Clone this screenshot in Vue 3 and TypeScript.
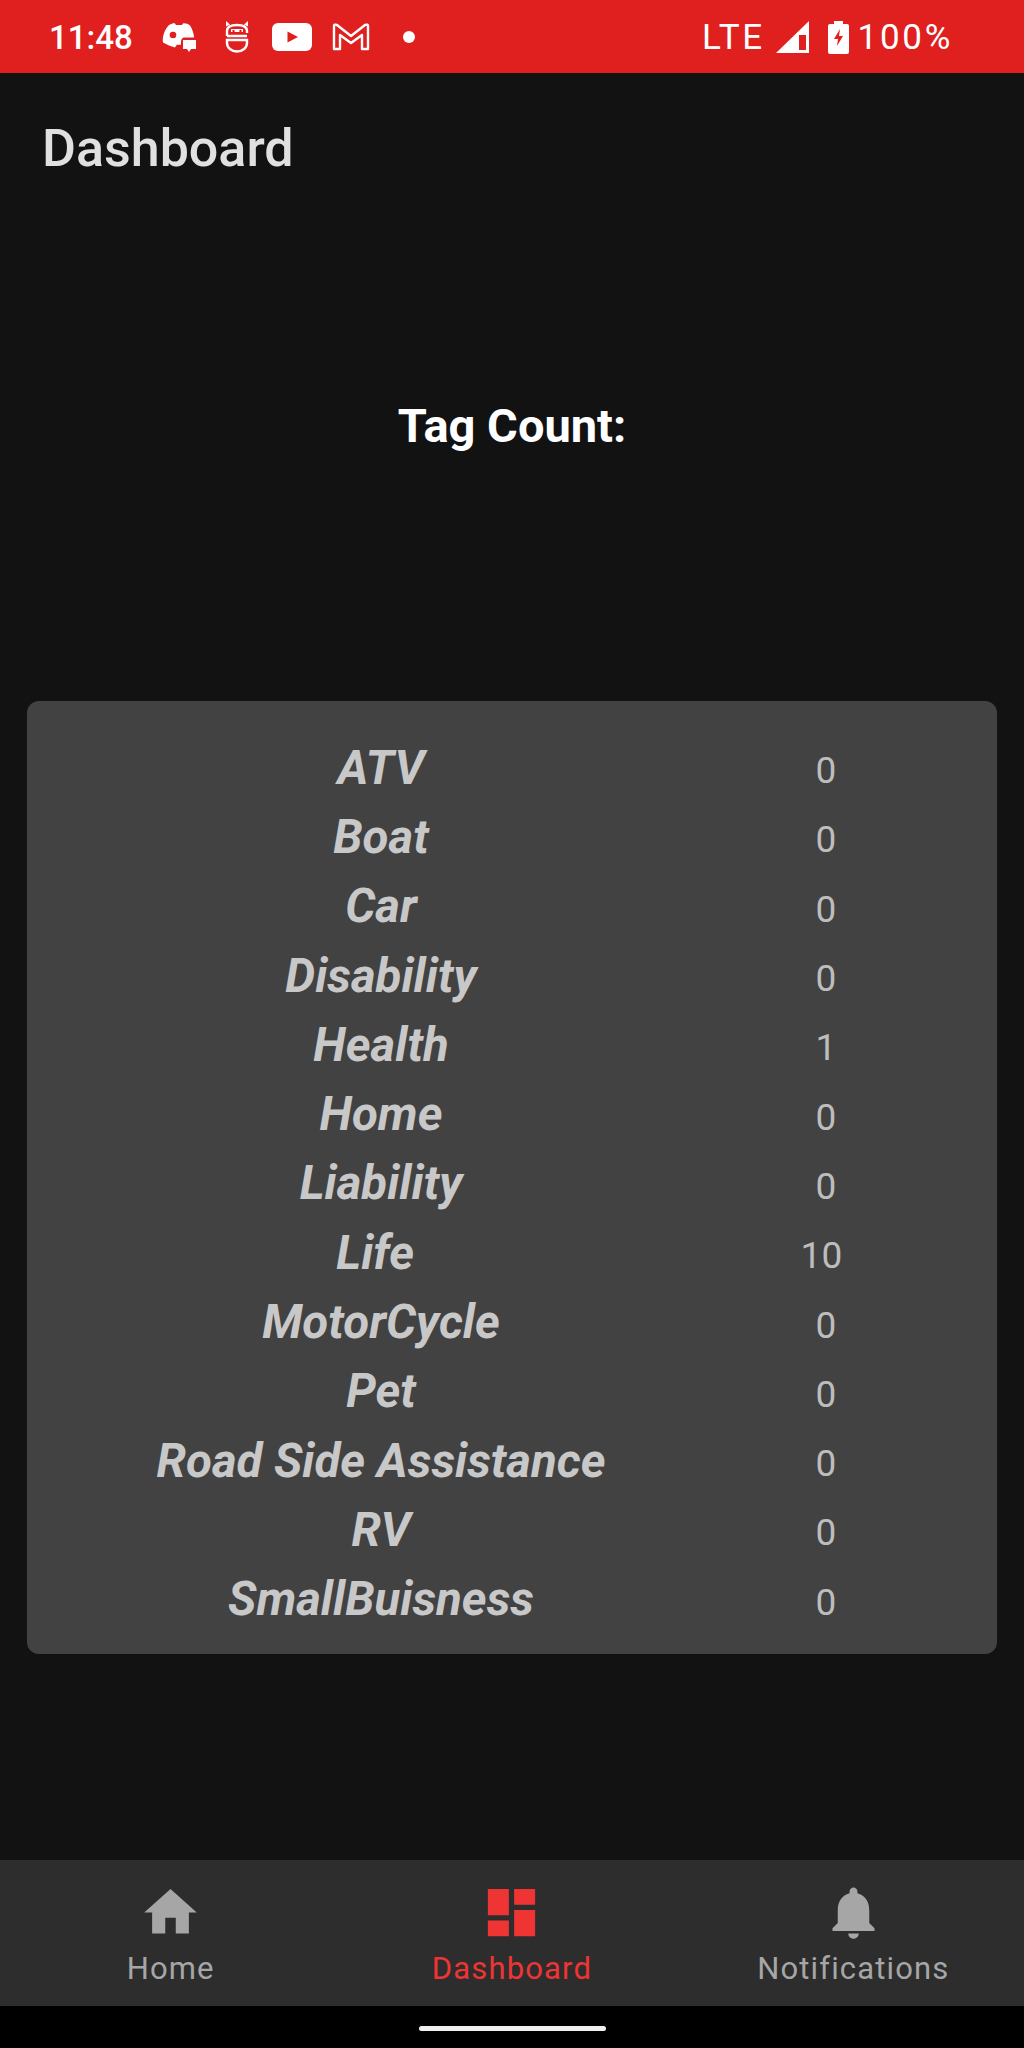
<template>
  <div class="screen">
    <div class="status-bar">
      <span class="clock">11:48</span>
      <div class="notif-icons">
        <svg viewBox="0 0 36 30" width="36" height="30">
          <path fill="#fff" d="M8 3c3-1.500 5-2 6-1.500l1 1.500h6l1-1.500c2-.5 5 .5 7 2 2 3 4 8 4 12h-9c-3 0-4 2-4 5v2c-2 .5-3 .5-4 0l-2 3c-4-1-8-3-12-5C1 16 3 8 8 3z" />
          <circle cx="12" cy="13" r="3.300" fill="#e01f1f" />
          <path fill="#fff" d="M22 18h13v9h-5l-2 3-2-3h-4z" />
        </svg>
        <svg viewBox="0 0 26 32" width="26" height="32">
          <path fill="none" stroke="#fff" stroke-width="2.400" d="M3 15V10q0-6 10-6t10 6v2M3 15h20M3 19h20v3a10 8.500 0 0 1-20 0z" />
          <path fill="#fff" d="M7 8h12v3H7z" />
          <circle cx="9.500" cy="10" r="1.200" fill="#e01f1f" />
          <circle cx="16.500" cy="10" r="1.200" fill="#e01f1f" />
          <path fill="#fff" d="M2 0l4 3.500-4 2zM24 0l-4 3.500 4 2z" />
        </svg>
        <svg viewBox="0 0 40 28" width="40" height="28">
          <rect width="40" height="28" rx="6" fill="#fff" />
          <path fill="#e01f1f" d="M15.500 8.500 26 14l-10.500 5.500z" />
        </svg>
        <svg viewBox="0 0 38 30" width="38" height="30">
          <path fill="none" stroke="#fff" stroke-width="2.400" stroke-linejoin="round" d="M2 27V4q0-2 3-1l14 11L33 3q3-1 3 1v23h-6V13L19 21 8 13v14z" />
        </svg>
        <span class="dot"></span>
      </div>
      <div class="sys-icons">
        <span class="lte">LTE</span>
        <svg class="ic-signal" viewBox="0 0 33 32" width="33" height="32">
          <path fill="#fff" d="M33 0v32H0z" />
          <path fill="#e01f1f" d="M23 14h7v15h-7z" />
        </svg>
        <svg viewBox="0 0 21 33" width="21" height="33">
          <path fill="#fff" d="M6 0h9v3h4q2 0 2 2v26q0 2-2 2H2q-2 0-2-2V5q0-2 2-2h4z" />
          <path fill="#e01f1f" d="M12 8 6 18h4l-1 7 6-10h-4z" />
        </svg>
        <span class="battery-pct">100%</span>
      </div>
    </div>

    <main class="content">
      <h1 class="title">Dashboard</h1>
      <h2 class="tag-count">Tag Count:</h2>
      <section class="card">
        <div v-for="tag in tags" :key="tag.name" class="row">
          <span class="tag-name">{{ tag.name }}</span>
          <span class="tag-value">{{ tag.count }}</span>
        </div>
      </section>
    </main>

    <nav class="bottom-nav">
      <div v-for="item in navItems" :key="item.id" class="nav-item" :class="{ active: item.id === 'dashboard' }">
        <svg class="nav-icon" viewBox="0 0 24 24" width="63" height="63">
          <path fill="currentColor" :d="item.path" />
        </svg>
        <span class="nav-label">{{ item.label }}</span>
      </div>
    </nav>

    <div class="gesture-area">
      <span class="gesture-pill"></span>
    </div>
  </div>
</template>

<script setup lang="ts">
// the Life row has a trailing space in both cells, which pulls it off centre
const tags: { name: string; count: string }[] = [
  { name: 'ATV', count: '0' },
  { name: 'Boat', count: '0' },
  { name: 'Car', count: '0' },
  { name: 'Disability', count: '0' },
  { name: 'Health', count: '1' },
  { name: 'Home', count: '0' },
  { name: 'Liability', count: '0' },
  { name: 'Life\u00a0', count: '10\u00a0' },
  { name: 'MotorCycle', count: '0' },
  { name: 'Pet', count: '0' },
  { name: 'Road Side Assistance', count: '0' },
  { name: 'RV', count: '0' },
  { name: 'SmallBuisness', count: '0' },
]

const navItems = [
  { id: 'home', label: 'Home', path: 'M10 20v-6h4v6h5v-8h3L12 3 2 12h3v8z' },
  { id: 'dashboard', label: 'Dashboard', path: 'M3 13h8V3H3v10zm0 8h8v-6H3v6zm10 0h8V11h-8v10zm0-18v6h8V3h-8z' },
  {
    id: 'notifications',
    label: 'Notifications',
    path: 'M12 22c1.100 0 2-.9 2-2h-4c0 1.100.9 2 2 2zm6-6v-5c0-3.070-1.630-5.640-4.500-6.320V4c0-.83-.67-1.500-1.500-1.500s-1.500.67-1.500 1.500v.68C7.640 5.360 6 7.920 6 11v5l-2 2v1h16v-1l-2-2z',
  },
]
</script>

<style>
html,
body {
  margin: 0;
  background: #121212;
}
</style>

<style scoped>
.screen {
  width: 1024px;
  height: 2048px;
  display: flex;
  flex-direction: column;
  background: #121212;
  font-family: Roboto, 'Liberation Sans', sans-serif;
  overflow: hidden;
}

.status-bar {
  height: 73px;
  flex: none;
  display: flex;
  align-items: center;
  padding: 1px 74px 0 49px;
  box-sizing: border-box;
  background: #e01f1f;
  color: #fff;
  font-size: 33px;
  font-weight: 500;
}

.clock {
  width: 112px;
}

.notif-icons {
  display: flex;
  align-items: center;
  gap: 22px;
}

.notif-icons svg:nth-child(2) {
  margin-left: 5px;
}

.notif-icons svg:nth-child(4) {
  margin-left: -2px;
}

.dot {
  width: 12px;
  height: 12px;
  margin-left: 11px;
  border-radius: 50%;
  background: #fff;
}

.sys-icons {
  margin-left: auto;
  display: flex;
  align-items: center;
  gap: 11px;
  font-size: 35px;
  font-weight: 400;
}

.lte {
  letter-spacing: 2.500px;
}

.ic-signal {
  margin-right: 8px;
}

.battery-pct {
  margin-left: -2px;
  margin-right: -3px;
  letter-spacing: 2.700px;
}

.content {
  flex: 1;
  display: flex;
  flex-direction: column;
}

.title {
  margin: 48px 0 0 42px;
  font-size: 52px;
  line-height: 56px;
  font-weight: 500;
  color: #e0e0e0;
}

.tag-count {
  margin: 223px 0 0;
  text-align: center;
  font-size: 47px;
  line-height: 52px;
  font-weight: 700;
  color: #fff;
}

.card {
  margin: 249px 27px 0;
  height: 953px;
  box-sizing: border-box;
  padding: 32px 80px 0 0;
  border-radius: 12px;
  background: #424242;
}

.row {
  height: 69.300px;
  display: grid;
  grid-template-columns: 708px 182px;
  align-items: center;
  text-align: center;
}

.tag-name {
  font-size: 47.400px;
  font-weight: 700;
  font-style: italic;
  color: #c8c8c8;
}

.tag-value {
  padding-top: 6px;
  font-size: 37px;
  color: #bdbdbd;
}

.bottom-nav {
  height: 146px;
  flex: none;
  display: grid;
  grid-template-columns: repeat(3, 1fr);
  background: #2d2d2d;
}

.nav-item {
  display: flex;
  flex-direction: column;
  align-items: center;
  padding-top: 21px;
  color: #a6a6a6;
}

.nav-item.active {
  color: #ef3434;
}

.nav-label {
  margin-top: 7px;
  font-size: 31px;
  letter-spacing: 1.150px;
  line-height: 36px;
}

.gesture-area {
  height: 42px;
  flex: none;
  display: flex;
  justify-content: center;
  padding-top: 20px;
  box-sizing: border-box;
  background: #000;
}

.gesture-pill {
  width: 187px;
  height: 5px;
  border-radius: 3px;
  background: #f0f0f0;
}
</style>
